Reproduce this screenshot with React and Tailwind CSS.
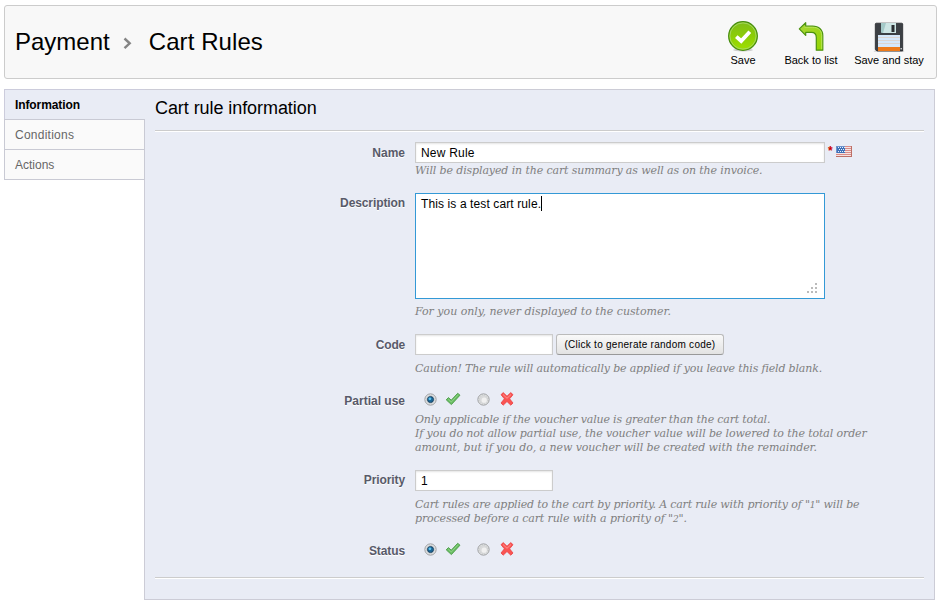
import React from "react";

function SaveIcon() {
  return (
    <svg width="32" height="32" viewBox="0 0 32 32">
      <defs>
        <linearGradient id="saveFill" x1="0" y1="0" x2="0" y2="1">
          <stop offset="0" stopColor="#7fbd1c" />
          <stop offset="0.5" stopColor="#8ccd06" />
          <stop offset="1" stopColor="#a0e000" />
        </linearGradient>
      </defs>
      <ellipse cx="16" cy="30" rx="10" ry="1.5" fill="#ccc" />
      <circle cx="16" cy="16" r="14.3" fill="url(#saveFill)" stroke="#478d10" strokeWidth="1.3" />
      <circle cx="16" cy="16" r="13.1" fill="none" stroke="#a8d96a" strokeWidth="0.9" />
      <path d="M9.3 16.6 L14.2 21 L22.8 11.8" fill="none" stroke="#fff" strokeWidth="3.8" />
    </svg>
  );
}

function BackIcon() {
  return (
    <svg width="32" height="32" viewBox="0 0 32 32">
      <defs>
        <linearGradient id="backFill" x1="0" y1="0" x2="1" y2="1">
          <stop offset="0" stopColor="#a8d63a" />
          <stop offset="1" stopColor="#93d500" />
        </linearGradient>
      </defs>
      <path
        d="M4.3 8.9 L10.7 2.7 V6.1 H17.5 C24 6.1 27.8 9.9 27.8 15.4 V30.2 H21.3 V17.6 C21.3 13.9 19.5 12.4 16.5 12.4 H10.7 V15.4 Z"
        fill="url(#backFill)"
        stroke="#4c9210"
        strokeWidth="1.2"
        strokeLinejoin="round"
      />
      <path d="M9.5 7.2 H17.5 C23.5 7.2 26.7 10.4 26.7 15.4 V29.2" fill="none" stroke="#c2e86c" strokeWidth="0.8" />
    </svg>
  );
}

function FloppyIcon() {
  return (
    <svg width="32" height="32" viewBox="0 0 32 32">
      <path d="M0.5 31.6 H31.5 L29 30 H3 Z" fill="#bdbdbd" />
      <path d="M2.3 4.2 Q2.3 3.2 3.3 3.2 H28.7 Q29.7 3.2 29.7 4.2 V31 H4 L2.3 29.5 Z" fill="#3c4045" stroke="#24272b" strokeWidth="0.8" />
      <path d="M8 3 H23 V13 H9 L8 12 Z" fill="#cde5e4" />
      <path d="M8 3 H13 L10 13 H9 L8 12 Z" fill="#a4c9c8" />
      <rect x="18.5" y="5" width="3" height="7" fill="#292d31" />
      <rect x="5" y="15" width="22" height="12" fill="#d5e8fb" />
      <path d="M5 17.5 H27 M5 20.5 H27 M5 23.5 H27" stroke="#dcd3cc" strokeWidth="0.9" />
      <rect x="5" y="27" width="22" height="4" fill="#ed7b1b" />
      <rect x="27.6" y="28" width="1.1" height="1.4" fill="#fff" />
    </svg>
  );
}

function FlagIcon() {
  return (
    <svg width="16" height="11" viewBox="0 0 16 11" shapeRendering="crispEdges">
      <rect width="16" height="11" fill="#f5e3e1" />
      <path d="M0 .5H16M0 2.5H16M0 4.5H16M0 6.5H16M0 8.5H16M0 10.5H16" stroke="#d98b88" />
      <path d="M15.5 0V11M0 10.5H16" stroke="#bd6f66" />
      <rect width="9" height="7" fill="#3f71b8" />
      <path d="M0 .5H9M.5 0V7" stroke="#6d93cd" />
      <path d="M2 1.5H9M3 3.5H9M2 5.5H9" stroke="#e6eef9" strokeDasharray="1 1" />
    </svg>
  );
}

function CheckIcon() {
  return (
    <svg width="16" height="16" viewBox="0 0 16 16">
      <path d="M1.2 8.8 L3.5 6.6 L6.2 9.2 L12.7 2.3 L15 4.2 L6.4 13.6 Z" fill="#69bd62" stroke="#4a9a46" strokeWidth="0.9" strokeLinejoin="round" />
      <path d="M3.2 8 L6.3 11 L13 3.7" fill="none" stroke="#93d68b" strokeWidth="0.9" />
    </svg>
  );
}

function CrossIcon() {
  return (
    <svg width="16" height="16" viewBox="0 0 16 16">
      <path
        d="M2 3.7 L4.2 1.6 L8 5.2 L11.8 1.6 L14 3.7 L10.6 7.8 L14 12 L11.8 14.2 L8 10.5 L4.2 14.2 L2 12 L5.4 7.8 Z"
        fill="#fa5452"
        stroke="#ea4042"
        strokeWidth="0.8"
        strokeLinejoin="round"
      />
      <path d="M4 3.5 L8 7.3 L12 3.5" fill="none" stroke="#ff9291" strokeWidth="1" />
    </svg>
  );
}

function Radio({ checked }) {
  return (
    <svg width="13" height="13" viewBox="0 0 13 13">
      <circle cx="6.5" cy="6.5" r="5.6" fill="#f6f6f6" stroke="#8b8d8f" strokeWidth="0.9" />
      <circle cx="6.5" cy="6.5" r="4.1" fill={checked ? "#e9eef2" : "#d9dadb"} stroke="#c3c5c7" strokeWidth="0.7" />
      {checked ? (
        <>
          <circle cx="6.5" cy="6.5" r="3.1" fill="#1b6798" stroke="#17354f" strokeWidth="0.8" />
          <circle cx="5.9" cy="5.8" r="1.4" fill="#5fc3ee" />
        </>
      ) : (
        <circle cx="7.2" cy="7.2" r="2.6" fill="#f0f0f0" />
      )}
    </svg>
  );
}

function YesNo() {
  return (
    <div className="flex h-[17px] items-start pl-[8.5px]">
      <span className="pt-[1.5px]"><Radio checked /></span>
      <span className="ml-[8.5px]"><CheckIcon /></span>
      <span className="ml-4 pt-[1.5px]"><Radio /></span>
      <span className="ml-[9px]"><CrossIcon /></span>
    </div>
  );
}

function Row({ label, className, labelClass, children }) {
  return (
    <div className={"flex " + className}>
      <div className={"w-[250px] shrink-0 text-right text-xs leading-[14px] font-bold text-[#585a69] [text-shadow:0_1px_0_#fff] " + labelClass}>
        {label}
      </div>
      <div className="ml-2.5">{children}</div>
    </div>
  );
}

function Hint({ children, className }) {
  return (
    <div className={"whitespace-nowrap font-['DejaVu_Serif',serif] text-[11px] leading-[14px] text-[#7f7f7f] italic " + className}>
      {children}
    </div>
  );
}

const inputBox = "flex h-[21px] items-center border border-[#ccc] bg-white pl-[5px] text-xs text-black shadow-[inset_0_1px_2px_#e4e4e4] ";

export default function App() {
  return (
    <div className="h-[600px] w-[941px] overflow-hidden bg-white pt-[5px] pl-1 font-['Liberation_Sans',Arial,sans-serif] text-black">
      <header className="flex h-[74px] w-[933px] rounded-[3px] border border-[#ccc] bg-[#f8f8f8]">
        <h1 className="flex items-center pb-px pl-2.5 text-2xl leading-7">
          <span>Payment</span>
          <svg className="mt-[3px] ml-[13px]" width="10" height="13" viewBox="0 0 10 13">
            <path d="M1.5 1.5 L6.7 6.3 L1.5 11.2" fill="none" stroke="#858585" strokeWidth="2.4" />
          </svg>
          <span className="ml-4 tracking-[0.08px]">Cart Rules</span>
        </h1>
        <div className="mt-[14px] ml-auto flex text-[11px] leading-[14px]">
          <div className="flex w-[50px] flex-col items-center"><SaveIcon /><span className="mt-px">Save</span></div>
          <div className="ml-2.5 flex w-[66px] flex-col items-center"><BackIcon /><span className="mt-px whitespace-nowrap">Back to list</span></div>
          <div className="mr-3 ml-2.5 flex w-[70px] flex-col items-center"><FloppyIcon /><span className="mt-px whitespace-nowrap">Save and stay</span></div>
        </div>
      </header>

      <div className="mt-2.5 flex">
        <nav className="z-10 -mr-px w-[141px] text-xs">
          <div className="flex h-[30px] items-center border-t border-l border-[#ccccdc] bg-[#e9ecf5] pl-2.5 font-bold tracking-[-0.1px]">Information</div>
          <div className="flex h-[30px] items-center border-t border-r border-l border-[#c9cad4] bg-[#fafafa] pl-2.5 tracking-[0.25px] text-[#666]">Conditions</div>
          <div className="flex h-[31px] items-center border border-[#c9cad4] bg-[#fafafa] pl-2.5 text-[#666]">Actions</div>
        </nav>
        <main className="h-[511px] w-[791px] border border-[#ccccd6] bg-[#e9ecf5] px-2.5">
          <h2 className="h-10 pt-2 text-lg leading-5 tracking-[-0.07px]">Cart rule information</h2>
          <div className="h-0.5 border-t border-b border-t-[#ccc] border-b-white" />

          <Row label="Name" className="mt-2.5 h-[51px]" labelClass="pt-1">
            <div className="flex">
              <div className={inputBox + "w-[410px] tracking-[0.2px]"}>New Rule</div>
              <span className="mt-0.5 ml-[3px] text-xs leading-[14px] font-bold text-[#c00]">*</span>
              <span className="mt-1 ml-[3px]"><FlagIcon /></span>
            </div>
            <Hint className="mt-px tracking-[-0.12px]">Will be displayed in the cart summary as well as on the invoice.</Hint>
          </Row>

          <Row label="Description" className="h-[141px]" labelClass="pt-[3px] tracking-[-0.1px]">
            <div className="flex h-[106px] w-[410px] flex-col border border-[#3399d6] bg-white pt-0.5 pr-[7px] pl-[5px] text-xs leading-[14px]">
              <div className="flex items-center tracking-[0.11px]">This is a test cart rule.<i className="h-[15px] w-px bg-black" /></div>
              <svg className="mt-auto mb-[5px] ml-auto" width="10" height="10" viewBox="0 0 10 10" fill="#bbb">
                <path d="M8 0h2v2h-2zM4 4h2v2h-2zM8 4h2v2h-2zM0 8h2v2h-2zM4 8h2v2h-2zM8 8h2v2h-2z" />
              </svg>
            </div>
            <Hint className="mt-1.5 tracking-[-0.02px]">For you only, never displayed to the customer.</Hint>
          </Row>

          <Row label="Code" className="h-[57px]" labelClass="pt-1 tracking-[-0.2px]">
            <div className="flex">
              <div className={inputBox + "w-[138px]"} />
              <button className="ml-[3px] h-[21px] w-[168px] rounded-[3px] border border-[#bbb] border-b-[#999] bg-linear-to-b from-[#f9f9f9] to-[#e3e3e3] text-[10px] leading-[19px] tracking-[0.26px] whitespace-nowrap">
                (Click to generate random code)
              </button>
            </div>
            <Hint className="mt-[7px] tracking-[-0.17px]">Caution! The rule will automatically be applied if you leave this field blank.</Hint>
          </Row>

          <Row label="Partial use" className="h-[79px]" labelClass="pt-[3px]">
            <YesNo />
            <Hint className="mt-[5px]">
              <div className="tracking-[-0.18px]">Only applicable if the voucher value is greater than the cart total.</div>
              <div className="tracking-[-0.12px]">If you do not allow partial use, the voucher value will be lowered to the total order</div>
              <div className="tracking-[-0.08px]">amount, but if you do, a new voucher will be created with the remainder.</div>
            </Hint>
          </Row>

          <Row label="Priority" className="h-[71px]" labelClass="pt-[3px] tracking-[-0.1px]">
            <div className={inputBox + "w-[138px]"}>1</div>
            <Hint className="mt-[7px]">
              <div className="tracking-[-0.17px]">
                Cart rules are applied to the cart by priority. A cart rule with priority of "<span className="text-[9px]">1</span>" will be
              </div>
              <div className="tracking-[-0.12px]">
                processed before a cart rule with a priority of "<span className="text-[9px]">2</span>".
              </div>
            </Hint>
          </Row>

          <Row label="Status" className="h-9" labelClass="pt-[3px] tracking-[-0.1px]">
            <YesNo />
          </Row>
          <div className="h-0.5 border-t border-b border-t-[#ccc] border-b-white" />
        </main>
      </div>
    </div>
  );
}
